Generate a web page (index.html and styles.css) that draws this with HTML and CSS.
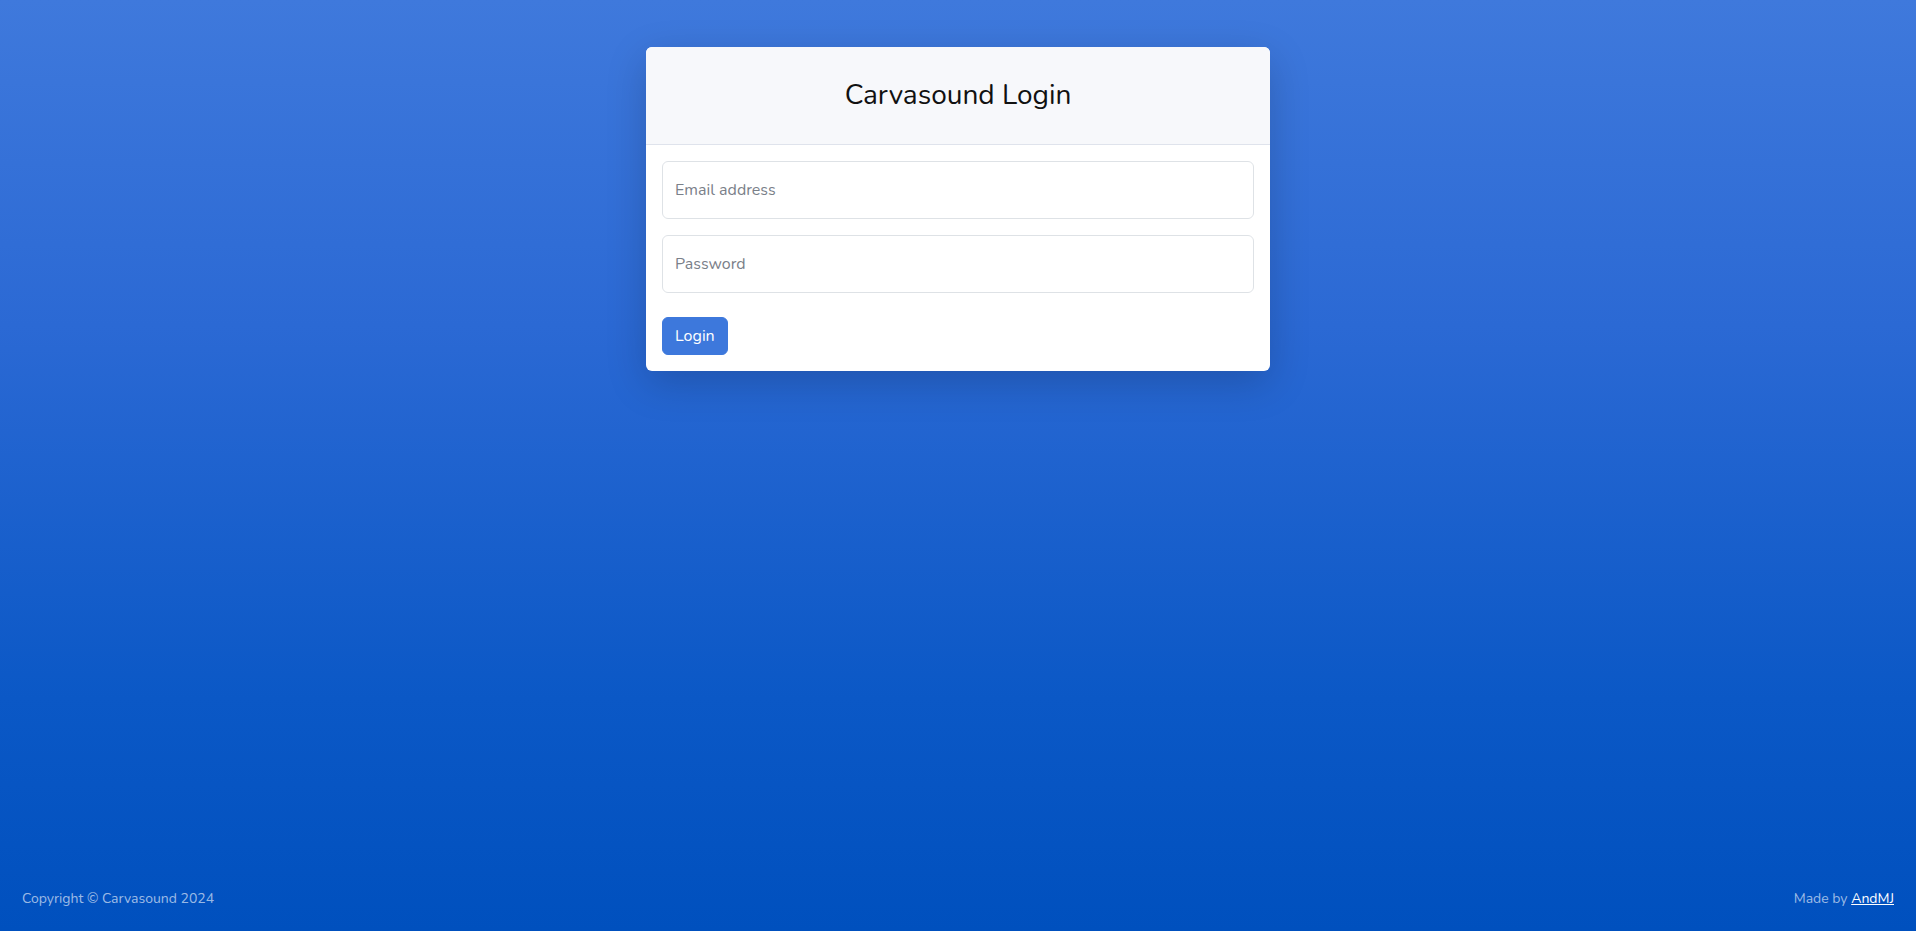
FILE: index.html
```html
<!DOCTYPE html>
<html lang="en">
<head>
<meta charset="utf-8">
<title>Carvasound Login</title>
<link rel="stylesheet" href="styles.css">
</head>
<body>
<div class="page">
  <main class="main">
    <div class="card">
      <div class="card-header">
        <h3 class="title">Carvasound Login</h3>
      </div>
      <form class="card-body">
        <div class="field">
          <input class="input" type="email" placeholder="Email address">
        </div>
        <div class="field">
          <input class="input" type="password" placeholder="Password">
        </div>
        <button class="btn" type="button">Login</button>
      </form>
    </div>
  </main>
  <footer class="footer">
    <span class="copy">Copyright © Carvasound 2024</span>
    <span class="made">Made by <a class="link" href="#">AndMJ</a></span>
  </footer>
</div>
</body>
</html>
```
FILE: styles.css
```css
html, body {
  margin: 0;
  padding: 0;
  height: 100%;
}
body {
  font-family: "Nunito", "Lato", "Noto Sans", sans-serif;
  font-size: 16px;
  color: #212529;
  background: linear-gradient(180deg, #3f79dc 0%, #2b69d4 35%, #0b58c6 75%, #0050be 100%);
}
.page {
  min-height: 100vh;
  display: flex;
  flex-direction: column;
  box-sizing: border-box;
}
.main {
  flex: 1;
  display: flex;
  justify-content: center;
  align-items: flex-start;
  padding-top: 47px;
}
.card {
  width: 624px;
  background: #fff;
  border-radius: 6px;
  overflow: hidden;
  box-shadow: 0 12px 40px rgba(0, 0, 0, 0.18);
}
.card-header {
  background: #f7f8fb;
  border-bottom: 1px solid #dfe3ec;
  height: 97px;
  display: flex;
  align-items: center;
  justify-content: center;
}
.title {
  margin: 0;
  font-weight: 400;
  font-size: 28px;
  line-height: 1.2;
  color: #111;
}
.card-body {
  padding: 16px;
  display: flex;
  flex-direction: column;
  align-items: flex-start;
}
.field {
  width: 100%;
  margin-bottom: 16px;
}
.field + .field {
  margin-bottom: 24px;
}
.input {
  display: block;
  width: 100%;
  box-sizing: border-box;
  height: 58px;
  padding: 16px 12px;
  font-family: inherit;
  font-size: 16px;
  color: #212529;
  background: #fff;
  border: 1px solid #dee2e6;
  border-radius: 6px;
  outline: none;
}
.input::placeholder {
  color: #7a8089;
}
.btn {
  font-family: inherit;
  font-size: 16px;
  line-height: 24px;
  padding: 6px 12px;
  color: #fff;
  background: #3d78dc;
  border: 1px solid #3d78dc;
  border-radius: 6px;
  cursor: pointer;
}
.footer {
  display: flex;
  justify-content: space-between;
  align-items: center;
  padding: 0 22px 22px;
  font-size: 14px;
  line-height: 21px;
  color: rgba(255, 255, 255, 0.62);
}
.link {
  color: #fff;
  text-decoration: underline;
}
```
